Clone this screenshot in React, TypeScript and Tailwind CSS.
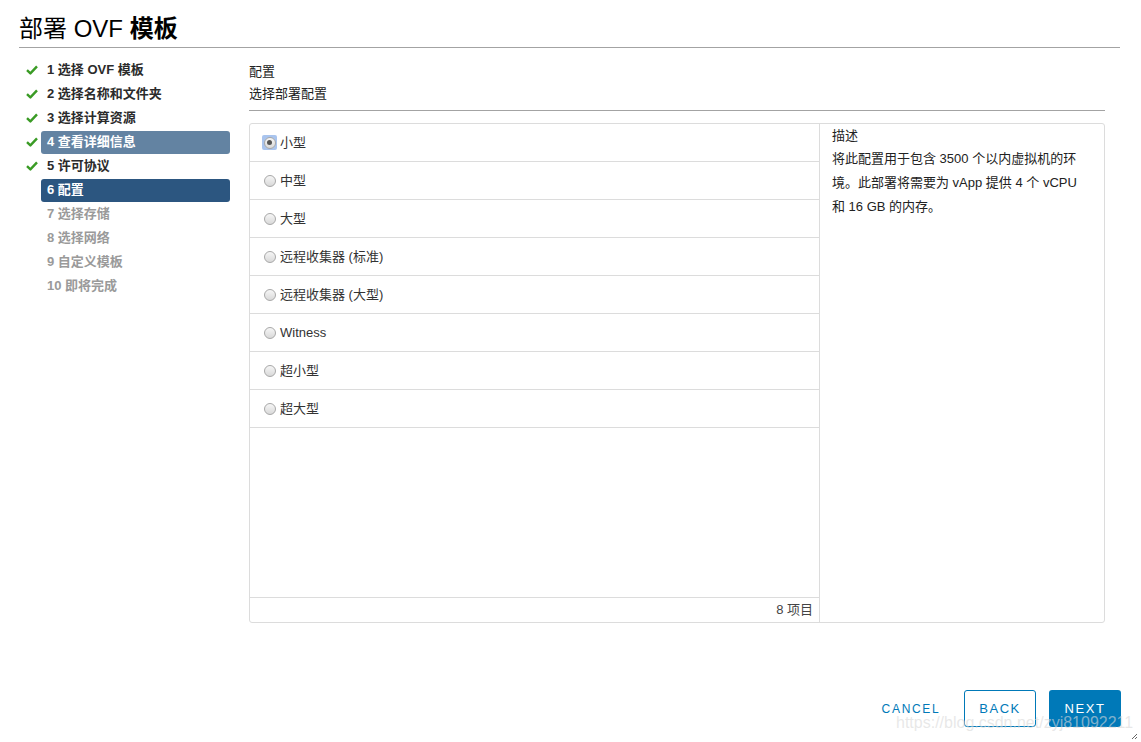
import React from "react";

type Step = { label: string; done: boolean; state?: "visited" | "current" | "future" };

const steps: Step[] = [
  { label: "1 选择 OVF 模板", done: true },
  { label: "2 选择名称和文件夹", done: true },
  { label: "3 选择计算资源", done: true },
  { label: "4 查看详细信息", done: true, state: "visited" },
  { label: "5 许可协议", done: true },
  { label: "6 配置", done: false, state: "current" },
  { label: "7 选择存储", done: false, state: "future" },
  { label: "8 选择网络", done: false, state: "future" },
  { label: "9 自定义模板", done: false, state: "future" },
  { label: "10 即将完成", done: false, state: "future" },
];

const options = ["小型", "中型", "大型", "远程收集器 (标准)", "远程收集器 (大型)", "Witness", "超小型", "超大型"];

const Check = () => (
  <svg width="12" height="10" viewBox="0 0 12 10" aria-hidden="true">
    <path d="M1 5.2 L4.4 8.4 L11 1.4" fill="none" stroke="#3a9b25" strokeWidth="2.4" strokeLinejoin="round" />
  </svg>
);

const Radio = ({ checked }: { checked: boolean }) => (
  <span
    className={
      checked
        ? "flex h-[15px] w-[15px] items-center justify-center rounded-[2px] bg-[#a9c4ee]"
        : "flex h-[15px] w-[15px] items-center justify-center"
    }
  >
    <span className="flex h-[12px] w-[12px] items-center justify-center rounded-full border border-[#a8a8a8] bg-gradient-to-b from-[#f6f6f6] to-[#d9d9d9]">
      {checked && <span className="h-[5px] w-[5px] rounded-full bg-[#555]" />}
    </span>
  </span>
);

export default function App() {
  return (
    <div
      className="relative flex h-[742px] w-[1141px] flex-col overflow-hidden bg-white text-[#333]"
      style={{ fontFamily: '"Liberation Sans", "Noto Sans CJK SC", sans-serif' }}
    >
      <div className="ml-[19px] mr-[21px] h-[48px] border-b border-[#a3a3a3] pt-[14px]">
        <h1 className="text-[24px] leading-[30px] text-black">
          部署 <span className="font-light">OVF</span> <span className="font-bold">模板</span>
        </h1>
      </div>

      <div className="flex">
        <nav className="w-[230px] shrink-0 pl-[26px] pt-[10px]">
          {steps.map((s) => (
            <div key={s.label} className="flex h-[24px] items-center">
              <span className="flex w-[15px] shrink-0 items-center">{s.done && <Check />}</span>
              <span
                className={
                  s.state === "visited"
                    ? "flex h-[23px] w-[189px] items-center rounded-[3px] bg-[#6383a2] px-[6px] text-[13px] font-bold text-white"
                    : s.state === "current"
                    ? "flex h-[23px] w-[189px] items-center rounded-[3px] bg-[#2c5680] px-[6px] text-[13px] font-bold text-white"
                    : s.state === "future"
                    ? "flex h-[23px] w-[189px] items-center px-[6px] text-[13px] font-bold text-[#9a9a9a]"
                    : "flex h-[23px] w-[189px] items-center px-[6px] text-[13px] font-bold text-[#2b2b2b]"
                }
              >
                {s.label}
              </span>
            </div>
          ))}
        </nav>

        <main className="ml-[19px] w-[856px] pt-[13px]">
          <div className="border-b border-[#a3a3a3] pb-[5px] text-[13px] leading-[22px] text-[#222]">
            <div>配置</div>
            <div>选择部署配置</div>
          </div>

          <div className="mt-[12px] flex h-[500px] rounded-[3px] border border-[#dcdcdc]">
            <div className="flex w-[570px] flex-col border-r border-[#dcdcdc]">
              <div className="flex-1">
                {options.map((o, i) => (
                  <div key={o} className="flex h-[38px] items-center gap-[3px] border-b border-[#dcdcdc] pl-[12px] text-[13px] text-[#333]">
                    <Radio checked={i === 0} />
                    <span>{o}</span>
                  </div>
                ))}
              </div>
              <div className="flex h-[25px] items-center justify-end border-t border-[#dcdcdc] pr-[6px] text-[13px] text-[#444]">
                8 项目
              </div>
            </div>
            <div className="flex-1 pl-[12px] pr-[10px] text-[13px] text-[#222]">
              <div className="pt-[1px] leading-[22px]">描述</div>
              <p className="leading-[24px]">
                <span className="block">将此配置用于包含 3500 个以内虚拟机的环</span>
                <span className="block">境。此部署将需要为 vApp 提供 4 个 vCPU</span>
                <span className="block">和 16 GB 的内存。</span>
              </p>
            </div>
          </div>
        </main>
      </div>

      <div className="mt-auto mr-[20px] flex justify-end gap-[13px] pb-[15px]">
        <button className="h-[37px] w-[80px] text-[12px] tracking-[0.14em] text-[#0079b8]">CANCEL</button>
        <button className="h-[37px] w-[72px] rounded-[3px] border border-[#0079b8] text-[13px] tracking-[0.12em] text-[#0079b8]">
          BACK
        </button>
        <button className="h-[37px] w-[72px] rounded-[3px] bg-[#0079b8] text-[13px] tracking-[0.12em] text-white">
          NEXT
        </button>
      </div>

      <div className="pointer-events-none absolute left-[896px] top-[711px] text-[16px] text-[#d8d8d8]/60">
        https://blog.csdn.net/zyj81092211
      </div>
      <svg className="absolute bottom-[2px] right-[3px]" width="7" height="7" viewBox="0 0 7 7" aria-hidden="true">
        <path d="M6 1 L1 6 M6 4 L4 6" stroke="#666" strokeWidth="1" />
      </svg>
    </div>
  );
}
